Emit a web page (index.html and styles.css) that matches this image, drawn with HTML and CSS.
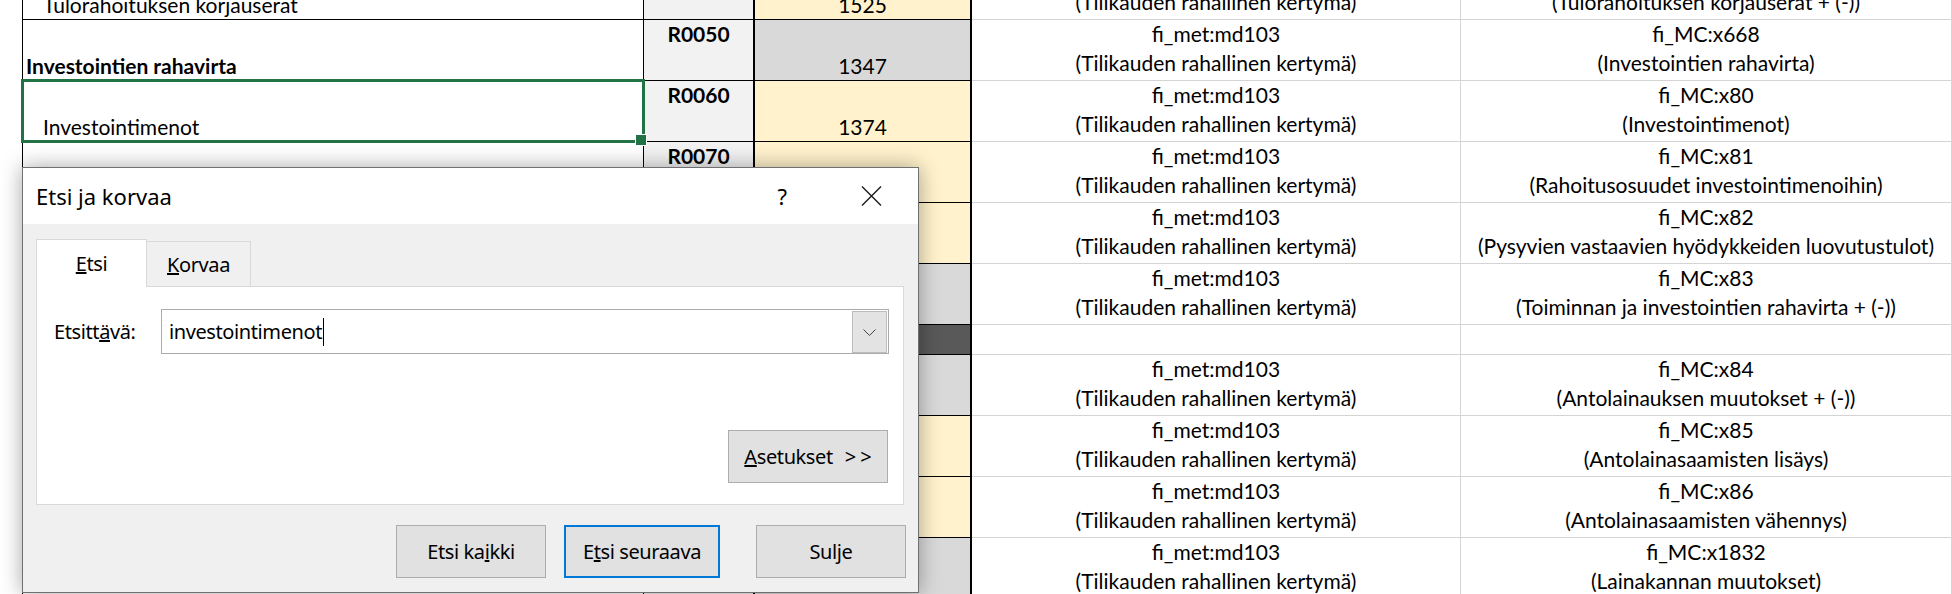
FILE: index.html
```html
<!DOCTYPE html>
<html lang="fi">
<head>
    <meta charset="UTF-8">
    <meta name="viewport" content="width=device-width, initial-scale=1.0">
    <title>Rahoituslaskelma</title>
    <link rel="stylesheet" href="styles.css">
</head>
<body>
    <div class="sheet">
        <div class="row">
            <div class="cell pad"></div>
            <div class="cell label indent">Tulorahoituksen korjauserat</div>
            <div class="cell code">R0040</div>
            <div class="cell value yellow">1525</div>
            <div class="cell xbrl"><span>fi_met:md103</span><span>(Tilikauden rahallinen kertymä)</span></div>
            <div class="cell xbrl"><span>fi_MC:x667</span><span>(Tulorahoituksen korjauserat + (-))</span></div>
        </div>
        <div class="row">
            <div class="cell pad"></div>
            <div class="cell label bold">Investointien rahavirta</div>
            <div class="cell code">R0050</div>
            <div class="cell value grey">1347</div>
            <div class="cell xbrl"><span>fi_met:md103</span><span>(Tilikauden rahallinen kertymä)</span></div>
            <div class="cell xbrl"><span>fi_MC:x668</span><span>(Investointien rahavirta)</span></div>
        </div>
        <div class="row">
            <div class="cell pad"></div>
            <div class="cell label indent selected">Investointimenot</div>
            <div class="cell code">R0060</div>
            <div class="cell value yellow">1374</div>
            <div class="cell xbrl"><span>fi_met:md103</span><span>(Tilikauden rahallinen kertymä)</span></div>
            <div class="cell xbrl"><span>fi_MC:x80</span><span>(Investointimenot)</span></div>
        </div>
        <div class="row">
            <div class="cell pad"></div>
            <div class="cell label indent">Rahoitusosuudet investointimenoihin</div>
            <div class="cell code">R0070</div>
            <div class="cell value yellow">15</div>
            <div class="cell xbrl"><span>fi_met:md103</span><span>(Tilikauden rahallinen kertymä)</span></div>
            <div class="cell xbrl"><span>fi_MC:x81</span><span>(Rahoitusosuudet investointimenoihin)</span></div>
        </div>
        <div class="row">
            <div class="cell pad"></div>
            <div class="cell label indent">Pysyvien vastaavien hyödykkeiden luovutustulot</div>
            <div class="cell code">R0080</div>
            <div class="cell value yellow">42</div>
            <div class="cell xbrl"><span>fi_met:md103</span><span>(Tilikauden rahallinen kertymä)</span></div>
            <div class="cell xbrl"><span>fi_MC:x82</span><span>(Pysyvien vastaavien hyödykkeiden luovutustulot)</span></div>
        </div>
        <div class="row">
            <div class="cell pad"></div>
            <div class="cell label bold">Toiminnan ja investointien rahavirta</div>
            <div class="cell code">R0090</div>
            <div class="cell value grey">-1208</div>
            <div class="cell xbrl"><span>fi_met:md103</span><span>(Tilikauden rahallinen kertymä)</span></div>
            <div class="cell xbrl"><span>fi_MC:x83</span><span>(Toiminnan ja investointien rahavirta + (-))</span></div>
        </div>
        <div class="row short">
            <div class="cell pad"></div>
            <div class="cell label"></div>
            <div class="cell code"></div>
            <div class="cell value dark"></div>
            <div class="cell xbrl"></div>
            <div class="cell xbrl"></div>
        </div>
        <div class="row">
            <div class="cell pad"></div>
            <div class="cell label bold">Antolainauksen muutokset</div>
            <div class="cell code">R0100</div>
            <div class="cell value grey">0</div>
            <div class="cell xbrl"><span>fi_met:md103</span><span>(Tilikauden rahallinen kertymä)</span></div>
            <div class="cell xbrl"><span>fi_MC:x84</span><span>(Antolainauksen muutokset + (-))</span></div>
        </div>
        <div class="row">
            <div class="cell pad"></div>
            <div class="cell label indent">Antolainasaamisten lisäys</div>
            <div class="cell code">R0110</div>
            <div class="cell value yellow">0</div>
            <div class="cell xbrl"><span>fi_met:md103</span><span>(Tilikauden rahallinen kertymä)</span></div>
            <div class="cell xbrl"><span>fi_MC:x85</span><span>(Antolainasaamisten lisäys)</span></div>
        </div>
        <div class="row">
            <div class="cell pad"></div>
            <div class="cell label indent">Antolainasaamisten vähennys</div>
            <div class="cell code">R0120</div>
            <div class="cell value yellow">0</div>
            <div class="cell xbrl"><span>fi_met:md103</span><span>(Tilikauden rahallinen kertymä)</span></div>
            <div class="cell xbrl"><span>fi_MC:x86</span><span>(Antolainasaamisten vähennys)</span></div>
        </div>
        <div class="row">
            <div class="cell pad"></div>
            <div class="cell label bold">Lainakannan muutokset</div>
            <div class="cell code">R0130</div>
            <div class="cell value grey">0</div>
            <div class="cell xbrl"><span>fi_met:md103</span><span>(Tilikauden rahallinen kertymä)</span></div>
            <div class="cell xbrl"><span>fi_MC:x1832</span><span>(Lainakannan muutokset)</span></div>
        </div>
    </div>

    <div class="dialog">
        <div class="titlebar">
            <span class="title">Etsi ja korvaa</span>
            <span class="help">?</span>
            <svg class="close" width="21" height="20" viewBox="0 0 21 20">
                <path d="M1 0.5 L20 19.5 M20 0.5 L1 19.5" stroke="#1a1a1a" stroke-width="1.4" fill="none"/>
            </svg>
        </div>
        <div class="dialog-body">
            <div class="tabs">
                <div class="tab active"><u>E</u>tsi</div>
                <div class="tab"><u>K</u>orvaa</div>
            </div>
            <div class="panel">
                <div class="find-row">
                    <span class="find-label">Etsitt<u>ä</u>vä:</span>
                    <div class="combo">
                        <span class="combo-text">investointimenot</span><span class="caret"></span>
                        <span class="combo-btn">
                            <svg width="13" height="7" viewBox="0 0 13 7">
                                <path d="M0.5 0.5 L6.5 6.5 L12.5 0.5" stroke="#444" stroke-width="1" fill="none"/>
                            </svg>
                        </span>
                    </div>
                </div>
                <button class="btn options"><span><u>A</u>setukset</span><span class="arrows">&gt;&gt;</span></button>
            </div>
            <div class="actions">
                <button class="btn find-all">Etsi ka<u>i</u>kki</button>
                <button class="btn find-next"><span>E<u>t</u>si seuraava</span></button>
                <button class="btn close-btn">Sulje</button>
            </div>
        </div>
    </div>
</body>
</html>
```

FILE: styles.css
```css
:root {
    --grid-line: #d4d4d4;
    --yellow: #fff2cc;
    --grey: #d9d9d9;
    --dark: #595959;
    --code-bg: #f2f2f2;
    --excel-green: #217346;
    --dialog-bg: #f0f0f0;
    --button-bg: #e1e1e1;
    --button-border: #adadad;
    --accent: #0078d7;
}

* {
    margin: 0;
    padding: 0;
    box-sizing: border-box;
}

body {
    font-family: Lato, "Liberation Sans", sans-serif;
    font-size: 21px;
    color: #000;
    background-color: #fff;
    height: 594px;
    overflow: hidden;
    position: relative;
}

/* Spreadsheet */
.sheet {
    margin-top: -41px;
}

.row {
    display: grid;
    grid-template-columns: 22px 622px 111px 217px 489px 1fr;
    height: 61px;
}

.row.short {
    height: 30px;
}

.cell {
    display: flex;
    flex-direction: column;
    justify-content: flex-end;
    line-height: 28.5px;
    white-space: nowrap;
}

.label {
    border-left: 1px solid #000;
    border-right: 1px solid #000;
    border-bottom: 1px solid #000;
    padding-left: 3px;
}

.label.indent {
    padding-left: 20px;
}

.label.bold {
    font-weight: 700;
}

.label.selected {
    position: relative;
}

.label.selected::after {
    content: "";
    position: absolute;
    top: -2px;
    left: -2px;
    right: -2px;
    bottom: -2px;
    border: 3px solid var(--excel-green);
    z-index: 2;
}

.label.selected::before {
    content: "";
    position: absolute;
    width: 10px;
    height: 10px;
    right: -4px;
    bottom: -5px;
    background-color: var(--excel-green);
    border: 1px solid #fff;
    z-index: 3;
}

.code {
    justify-content: flex-start;
    background-color: var(--code-bg);
    border-right: 2px solid #000;
    border-bottom: 1px solid #000;
    font-weight: 700;
    text-align: center;
}

.value {
    border-right: 2px solid #000;
    border-bottom: 1px solid #000;
    text-align: center;
}

.value.yellow { background-color: var(--yellow); }
.value.grey { background-color: var(--grey); }
.value.dark { background-color: var(--dark); }

.xbrl {
    justify-content: flex-start;
    border-right: 1px solid var(--grid-line);
    border-bottom: 1px solid var(--grid-line);
    text-align: center;
}

/* Find & replace dialog */
.dialog {
    position: absolute;
    left: 22px;
    top: 167px;
    width: 897px;
    height: 426px;
    border: 1px solid #707070;
    box-shadow: 0 0 20px rgba(0, 0, 0, 0.35);
    display: flex;
    flex-direction: column;
    font-family: "Noto Sans", "Open Sans", sans-serif;
    font-size: 20px;
    letter-spacing: -0.4px;
    z-index: 10;
}

.titlebar {
    height: 56px;
    flex-shrink: 0;
    background-color: #fff;
    display: flex;
    align-items: center;
    padding: 0 36px 0 13px;
}

.title {
    flex: 1;
    font-size: 22px;
    letter-spacing: 0;
}

.help {
    font-size: 22px;
    letter-spacing: 0;
    margin-right: 74px;
}

.dialog-body {
    flex: 1;
    background-color: var(--dialog-bg);
    padding: 15px 14px 14px 13px;
    display: flex;
    flex-direction: column;
}

.tabs {
    display: flex;
    align-items: flex-end;
    height: 48px;
    margin-bottom: -1px;
    position: relative;
    z-index: 1;
}

.tab {
    display: flex;
    align-items: center;
    justify-content: center;
    height: 46px;
    width: 104px;
    border: 1px solid #d9d9d9;
    border-left: none;
    background-color: var(--dialog-bg);
}

.tab.active {
    height: 48px;
    width: 111px;
    border-left: 1px solid #d9d9d9;
    border-bottom: none;
    background-color: #fff;
}

.panel {
    height: 219px;
    background-color: #fff;
    border: 1px solid #d9d9d9;
    padding: 22px 14px 21px 17px;
    display: flex;
    flex-direction: column;
}

.find-row {
    display: flex;
    align-items: center;
}

.find-label {
    width: 107px;
    flex-shrink: 0;
}

.combo {
    flex: 1;
    height: 45px;
    border: 1px solid #ababab;
    display: flex;
    align-items: center;
    padding-left: 7px;
}

.caret {
    width: 1px;
    height: 28px;
    background-color: #000;
    margin-left: 1px;
}

.combo-btn {
    align-self: stretch;
    margin: 1px 1px 0 auto;
    width: 35px;
    background-color: #e3e3e3;
    border: 1px solid #bcbcbc;
    display: flex;
    align-items: center;
    justify-content: center;
}

.btn {
    font: inherit;
    letter-spacing: inherit;
    color: #000;
    background-color: var(--button-bg);
    border: 1px solid var(--button-border);
    height: 53px;
    display: flex;
    align-items: center;
    justify-content: center;
}

.btn .arrows {
    letter-spacing: 4px;
    margin-left: 12px;
    margin-right: -4px;
}

.btn.options {
    width: 160px;
    margin-top: auto;
    margin-right: 1px;
    align-self: flex-end;
}

.actions {
    display: flex;
    justify-content: flex-end;
    margin-top: 20px;
    margin-right: -2px;
}

.find-all {
    width: 150px;
    margin-right: 18px;
}

.find-next {
    width: 156px;
    margin-right: 36px;
    border: 2px solid var(--accent);
}

.close-btn {
    width: 150px;
}
```
